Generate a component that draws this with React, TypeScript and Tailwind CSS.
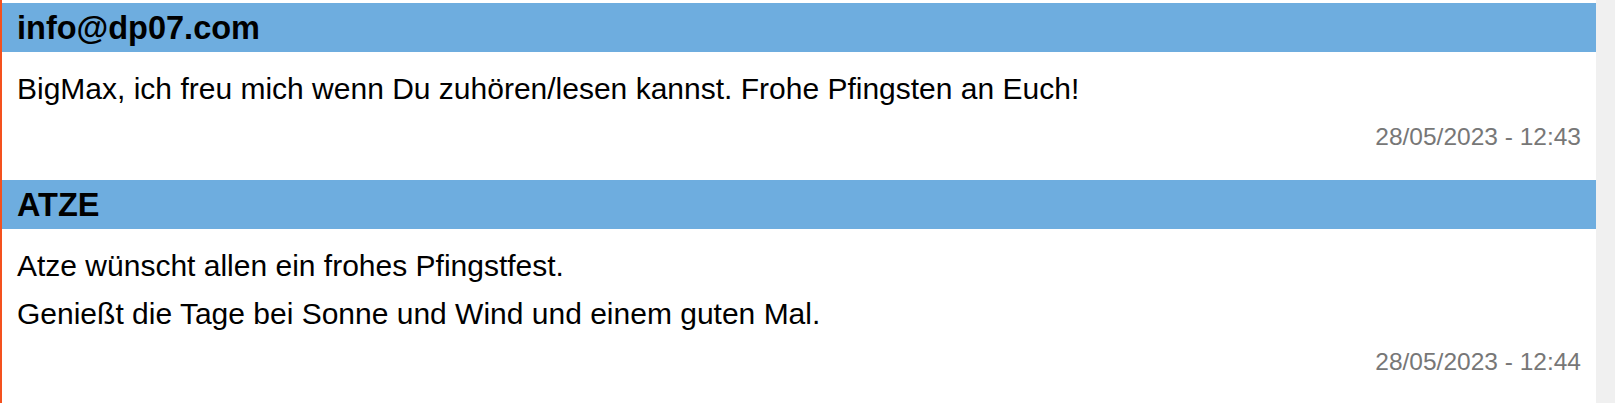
const entries = [
  {
    name: "info@dp07.com",
    lines: ["BigMax, ich freu mich wenn Du zuhören/lesen kannst. Frohe Pfingsten an Euch!"],
    date: "28/05/2023 - 12:43",
  },
  {
    name: "ATZE",
    lines: [
      "Atze wünscht allen ein frohes Pfingstfest.",
      "Genießt die Tage bei Sonne und Wind und einem guten Mal.",
    ],
    date: "28/05/2023 - 12:44",
  },
]

export default function App() {
  return (
    <div className="flex w-[1615px] h-[403px] overflow-hidden bg-white font-['Liberation_Sans',Arial,sans-serif]">
      {/* guestbook list */}
      <main className="flex-1 flex flex-col border-l-2 border-[#f4511e] pt-[3px]">
        {entries.map((e) => (
          <article key={e.date} className="flex flex-col">
            <h2 className="bg-[#6eaddf] px-[15px] pt-[6px] pb-[5px] text-[32.5px] leading-[38px] font-bold text-black">
              {e.name}
            </h2>
            <div className="flex flex-col gap-[14px] px-[15px] pt-[20px]">
              {e.lines.map((l) => (
                <p key={l} className="text-[30px] leading-[34px] text-black">
                  {l}
                </p>
              ))}
            </div>
            <div className="mt-[17px] mb-[29px] pr-[15px] text-right text-[24.5px] leading-[28px] text-[#777777]">
              {e.date}
            </div>
          </article>
        ))}
      </main>

      {/* scrollbar track */}
      <div className="w-[19px] bg-[#f0f0f0]" />
    </div>
  )
}
